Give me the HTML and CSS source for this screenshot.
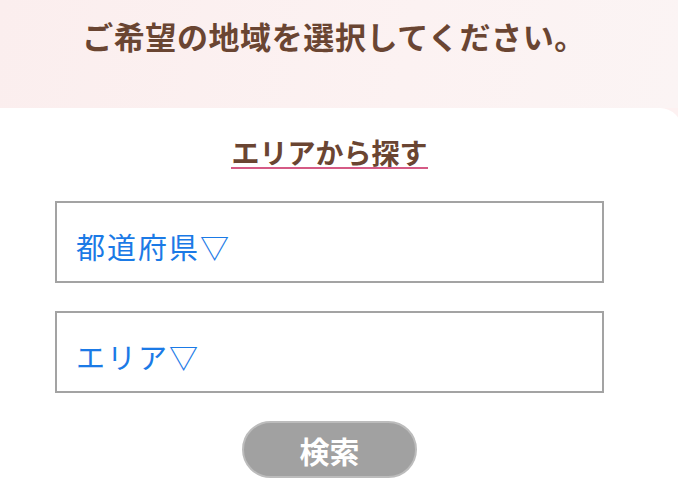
FILE: index.html
```html
<!DOCTYPE html>
<html lang="ja">
<head>
<meta charset="utf-8">
<title>エリアから探す</title>
<link rel="stylesheet" href="styles.css">
</head>
<body>
<div class="page">
  <header class="hero">
    <h1 class="hero-title">ご希望の地域を選択してください。</h1>
  </header>
  <main class="card">
    <div class="card-inner">
      <h2 class="section-title"><span class="section-title-text">エリアから探す</span></h2>
      <div class="select-box">都道府県▽</div>
      <div class="select-box">エリア▽</div>
      <button class="search-btn" type="button">検索</button>
    </div>
  </main>
</div>
</body>
</html>
```

FILE: styles.css
```css
html, body {
  margin: 0;
  padding: 0;
}
body {
  width: 678px;
  height: 493px;
  overflow: hidden;
  background: #fdf1f1;
  font-family: "Noto Sans CJK JP", "Noto Sans", sans-serif;
}
.page {
  display: flex;
  flex-direction: column;
  height: 493px;
}
.hero {
  height: 108px;
  padding-right: 10px;
  box-sizing: border-box;
  background: linear-gradient(100deg, #fbeeee 0%, #fcf2f2 60%, #fbf4f4 100%);
}
.hero-title {
  margin: 0;
  padding-top: 16px;
  text-align: center;
  font-size: 31px;
  font-weight: 700;
  line-height: 40px;
  color: #6a4532;
  letter-spacing: 0.6px;
}
.card {
  flex: 1;
  background: #ffffff;
  border-top-right-radius: 22px;
  margin-right: -4px;
}
.card-inner {
  width: 659px;
  display: flex;
  flex-direction: column;
  align-items: center;
}
.section-title {
  margin: 0;
  padding-top: 29px;
  font-size: 28px;
  font-weight: 700;
  line-height: 30px;
  color: #6a4532;
}
.section-title-text {
  display: inline-block;
  border-bottom: 2px solid #d55a85;
  line-height: 29px;
  letter-spacing: 0;
}
.select-box {
  box-sizing: border-box;
  width: 549px;
  height: 82px;
  border: 2px solid #a3a3a3;
  margin-top: 28px;
  padding: 25px 0 0 19px;
  font-size: 29px;
  line-height: 36px;
  letter-spacing: 2px;
  color: #1b7ae6;
  font-weight: 400;
}
.select-box:first-of-type {
  margin-top: 32px;
}
.search-btn {
  margin-top: 28px;
  width: 175px;
  height: 57px;
  border-radius: 29px;
  background: #a1a1a1;
  border: 2px solid #bcbcbc;
  color: #ffffff;
  font-family: "Noto Sans CJK JP", "Noto Sans", sans-serif;
  font-size: 30px;
  font-weight: 700;
  padding: 0;
  line-height: 1;
}
```
